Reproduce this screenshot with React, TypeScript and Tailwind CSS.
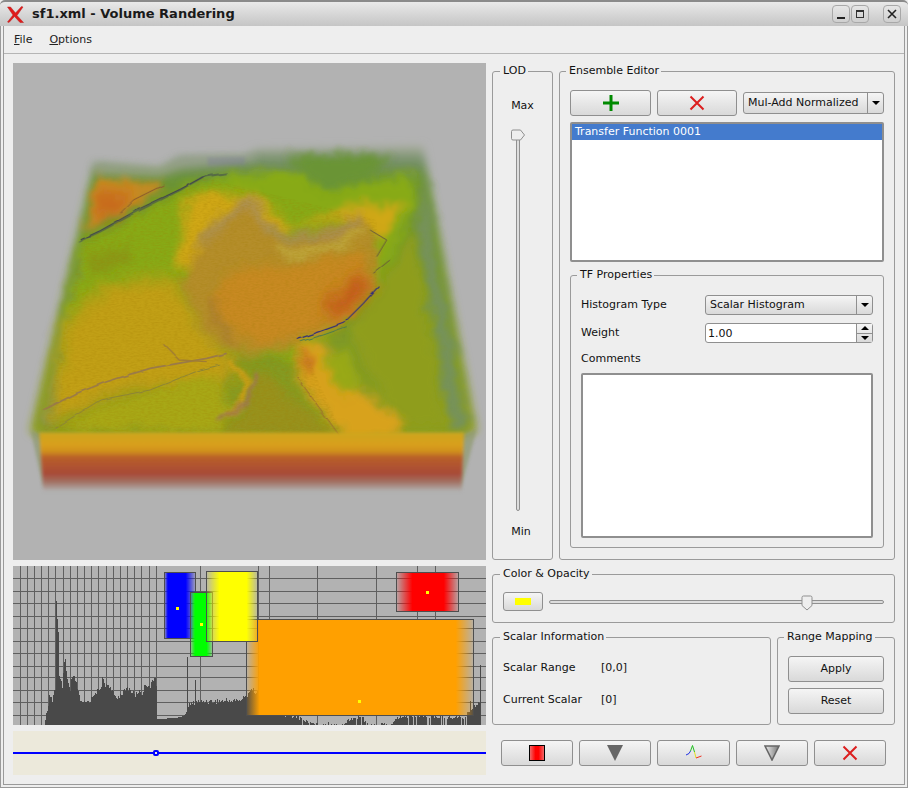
import type { ReactNode } from 'react'

const btn = 'flex items-center justify-center rounded-[3px] border border-[#8f8f8f] bg-gradient-to-b from-[#f5f5f5] to-[#d9d9d9]'

function Group({ title, className, legend = 'left-[7px]', children }: { title: string; className: string; legend?: string; children?: ReactNode }) {
  return (
    <div className={`relative rounded-[3px] border border-[#9a9a9a] ${className}`}>
      <span className={`absolute -top-[8px] ${legend} bg-[#eeeeee] pl-[3px] pr-[2px] leading-[14px]`}>{title}</span>
      {children}
    </div>
  )
}

function Arrow() {
  return <span className="h-0 w-0 border-x-[4px] border-t-[4px] border-x-transparent border-t-black" />
}

function Combo({ label, className }: { label: string; className: string }) {
  return (
    <div className={`${btn} !justify-start ${className}`}>
      <span className="flex-1 pl-[4px]">{label}</span>
      <span className="flex h-full w-[16px] items-center justify-center border-l border-[#8f8f8f]">
        <Arrow />
      </span>
    </div>
  )
}

function RedX({ size }: { size: number }) {
  return (
    <svg width={size} height={size} viewBox="0 0 16 16">
      <path d="M1.5 1.5 14.5 14.5M14.5 1.5 1.5 14.5" stroke="#dc1f1f" strokeWidth="2" fill="none" />
    </svg>
  )
}

function VolumeRender() {
  return (
    <svg className="block h-[497px] w-[473px]" viewBox="39 9 1419 1491" preserveAspectRatio="none">
      <defs>
        <filter id="b4" x="-20%" y="-20%" width="140%" height="140%"><feGaussianBlur stdDeviation="4" /></filter>
        <filter id="b12" x="-20%" y="-20%" width="140%" height="140%"><feGaussianBlur stdDeviation="12" /></filter>
        <filter id="b22" x="-30%" y="-30%" width="160%" height="160%"><feGaussianBlur stdDeviation="22" /></filter>
        <filter id="organic" x="-5%" y="-5%" width="110%" height="110%">
          <feTurbulence type="fractalNoise" baseFrequency="0.018" numOctaves="3" seed="7" result="n" />
          <feDisplacementMap in="SourceGraphic" in2="n" scale="44" xChannelSelector="R" yChannelSelector="G" />
          <feGaussianBlur stdDeviation="3" />
        </filter>
        <filter id="jag" x="-5%" y="-5%" width="110%" height="110%">
          <feTurbulence type="fractalNoise" baseFrequency="0.025" numOctaves="2" seed="3" result="n" />
          <feDisplacementMap in="SourceGraphic" in2="n" scale="9" xChannelSelector="R" yChannelSelector="G" />
          <feGaussianBlur stdDeviation="0.8" />
        </filter>
        <filter id="grain" x="0" y="0" width="100%" height="100%">
          <feTurbulence type="fractalNoise" baseFrequency="0.09 0.22" numOctaves="3" seed="4" />
          <feColorMatrix values="0 0 0 0 0.35  0 0 0 0 0.2  0 0 0 0 0  0 0 0 1.7 -0.68" />
        </filter>
        <linearGradient id="front" x1="0" y1="0" x2="0" y2="1">
          <stop offset="0" stopColor="#cda51c" />
          <stop offset="0.2" stopColor="#d9a01c" />
          <stop offset="0.32" stopColor="#d0901e" />
          <stop offset="0.42" stopColor="#b95f28" />
          <stop offset="0.7" stopColor="#a84a38" />
          <stop offset="0.84" stopColor="#a27263" />
          <stop offset="1" stopColor="#b2b2b2" />
        </linearGradient>
        <linearGradient id="topfade" x1="0" y1="0" x2="0" y2="1">
          <stop offset="0" stopColor="#a8ac9c" />
          <stop offset="0.05" stopColor="#76906a" />
          <stop offset="0.12" stopColor="#6b9434" />
          <stop offset="1" stopColor="#8e9e1e" />
        </linearGradient>
        <clipPath id="grainArea">
          <path d="M250 540 600 350 1130 480 1130 700 900 840 1030 1130 130 1110Z" />
        </clipPath>
      </defs>
      <rect x="39" y="9" width="1419" height="1491" fill="#b2b2b2" />

      {/* top face */}
      <g filter="url(#b12)">
        <path d="M283 310 480 328 540 292 735 288 770 268 1268 258 1430 1112 1385 1135 130 1135 90 1115Z" fill="url(#topfade)" />
      </g>
      <g filter="url(#organic)">
        <path d="M1250 500 1270 330 1400 1100 1350 1110Z" fill="#76925a" filter="url(#b12)" />
        <path d="M300 560 240 560 120 1100 170 1100Z" fill="#7c9450" filter="url(#b12)" />
        <path d="M1050 810 1240 500 1340 1100 1190 1100Z" fill="#8f9d1e" filter="url(#b12)" />
        <path d="M245 550 600 360 820 330 1040 370 1240 340 1250 440 1120 700 900 900 560 850 170 950Z" fill="#88aa12" filter="url(#b12)" />
        <path d="M260 590 390 550 390 610 270 640Z" fill="#8a9a18" filter="url(#b12)" />
        <path d="M870 285 1170 285 1130 340 1000 395 920 360Z" fill="#6b9435" filter="url(#b12)" />
        <path d="M140 1100 190 800 290 690 500 640 620 800 720 920 660 990 420 990 260 1040Z" fill="#c2a016" filter="url(#b22)" />
        <path d="M170 1108 300 1035 640 940 690 1060 660 1120Z" fill="#a8a815" filter="url(#b12)" />
        <path d="M560 400 760 400 880 500 1080 430 1220 440 1150 540 1020 480 800 520 600 640 530 620Z" fill="#d0a818" filter="url(#b12)" />
        <path d="M285 350 480 365 490 385 255 520Z" fill="#c88a22" filter="url(#b12)" />
        <path d="M300 400 400 395 340 465 290 480Z" fill="#c8641c" filter="url(#b22)" />

        {/* central basin */}
        <path d="M600 550 740 420 810 510 900 540 1090 470 1130 530 1130 690 1010 800 880 860 740 890 620 830 540 680Z" fill="#b58e2c" filter="url(#b12)" />
        <path d="M640 700 700 625 900 620 1080 570 1120 660 1050 770 890 830 760 850 660 790Z" fill="#c88a24" filter="url(#b12)" />
        <path d="M970 750 1060 640 1110 650 1090 720 1000 780Z" fill="#c65c1e" filter="url(#b22)" />
        <path d="M830 560 900 590 1000 560 1090 510" stroke="#c4b444" strokeWidth="20" fill="none" filter="url(#b12)" />
        <path d="M600 550 720 440 750 420 810 510 900 540 1000 520 1090 470" stroke="#a98e5a" strokeWidth="26" fill="none" filter="url(#b12)" />
        <path d="M640 700 650 790 700 850" stroke="#a87c34" strokeWidth="18" fill="none" filter="url(#b12)" />

        {/* lower ridge and fan */}
        <path d="M760 920 1030 1135 660 1115 740 1060Z" fill="#98921e" filter="url(#b12)" />
        <path d="M885 850 970 850 1040 960 1210 1080 1190 1130 1040 1150 895 960Z" fill="#d8a21e" filter="url(#b12)" />
        <path d="M890 855 920 950 950 900Z" fill="#c87524" filter="url(#b12)" />
        <path d="M1040 860 1080 960 1030 1010 970 900Z" fill="#98a818" filter="url(#b12)" />
        <path d="M690 900 740 960 725 1040 675 1070" stroke="#c8a018" strokeWidth="20" fill="none" filter="url(#b4)" />
        <path d="M765 930 750 1030 650 1085" stroke="#a07a50" strokeWidth="13" fill="none" filter="url(#b4)" />
      </g>

      {/* soft rim along the back edge */}
      <path d="M283 310 480 328 540 292 735 288 770 285 770 300 540 325 480 350 283 340Z" fill="#a6a89c" filter="url(#b12)" opacity="0.7" />
      <path d="M622 292 735 290 735 315 622 318Z" fill="#7a76a0" filter="url(#b4)" opacity="0.3" />

      <g clipPath="url(#grainArea)">
        <rect x="39" y="250" width="1419" height="900" filter="url(#grain)" opacity="0.32" />
      </g>

      {/* fault lines */}
      <g fill="none" filter="url(#jag)">
        <path d="M235 545 300 515 420 450 540 390 610 350 680 340" stroke="#4c5a4c" strokeWidth="6" opacity="0.7" />
        <path d="M240 540 300 512 420 445 540 388 610 350" stroke="#3a3a50" strokeWidth="2.5" />
        <path d="M360 460 400 420 490 375" stroke="#8a5a30" strokeWidth="3" />
        <path d="M890 838 960 815 1030 790 1090 730 1135 680" stroke="#34307a" strokeWidth="3.5" />
        <path d="M900 845 970 825 1040 800" stroke="#4d7a50" strokeWidth="3" />
        <path d="M1130 590 1160 540 1110 510 M1120 640 1170 600" stroke="#6a5a3c" strokeWidth="3" />
        <path d="M130 1050 230 1000 320 965 450 925 620 895 680 880" stroke="#9a7a48" strokeWidth="5" />
        <path d="M165 1105 300 1020 450 990 600 930 660 915" stroke="#8c8438" strokeWidth="3" />
        <path d="M490 850 540 900 620 905" stroke="#a07c34" strokeWidth="4" />
        <path d="M890 950 1035 1150" stroke="#9c6c30" strokeWidth="3" />
      </g>

      {/* front face */}
      <path d="M92 1112 130 1125 130 1285Z" fill="#8f9a70" filter="url(#b4)" opacity="0.7" />
      <path d="M1430 1108 1385 1125 1380 1295Z" fill="#8f9a70" filter="url(#b4)" opacity="0.7" />
      <path d="M118 1118H1392L1384 1294H130Z" fill="url(#front)" filter="url(#b4)" />
    </svg>
  )
}

// outline of the histogram: page x / top of the bar in page y
const HIST: [number, number][] = [
  [44, 724], [46, 714], [48, 708], [49, 697], [52, 700], [54, 690], [55, 688], [56, 601], [57, 620], [58, 633], [59, 678],
  [62, 686], [63, 675], [64, 664], [65, 661], [67, 680], [70, 692], [71, 679], [74, 678], [76, 684], [79, 697], [82, 704],
  [90, 700], [95, 692], [100, 690], [102, 679], [105, 685], [108, 684], [112, 692], [116, 698], [120, 695], [125, 690],
  [127, 688], [130, 690], [135, 695], [138, 691], [142, 694], [145, 684], [150, 686], [153, 680], [155, 676], [156, 684],
  [157, 719], [175, 718], [180, 717], [184, 715], [186, 712], [189, 705], [195, 702], [240, 700], [246, 696], [250, 690],
  [258, 692], [262, 712], [296, 716], [303, 720], [312, 723], [317, 725], [343, 725], [350, 719], [362, 717], [366, 725],
  [392, 725], [397, 717], [415, 716], [440, 717], [465, 718], [468, 712], [474, 705], [480, 703], [481, 725],
]

function histPath() {
  let d = ''
  let k = 0
  for (let x = 44; x < 481; x++) {
    while (k < HIST.length - 2 && HIST[k + 1][0] <= x) k++
    const [x0, y0] = HIST[k]
    const [x1, y1] = HIST[k + 1]
    let y = y0 + ((y1 - y0) * (x - x0)) / (x1 - x0)
    const noise = Math.sin(x * 12.9898) * 43758.5453
    const n = noise - Math.floor(noise)
    if (x < 157 || x > 188) y += (n - 0.5) * 5
    if (x === 187) y = 657
    if (x === 195) y = 680
    if (x === 470) y = 701
    if (x === 480) y = 665
    if (x > 300 && x < 468 && n > 0.82) y = 725
    if (x > 317 && x < 343 && n > 0.6 && n < 0.7) y = 722
    d += `M${x} 725V${Math.round(Math.min(y, 725))}H${x + 1}V725Z`
  }
  return d
}

const V_LINES = [20, 27, 34, 41, 48, 55, 63, 70, 77, 84, 91, 98, 106, 113, 120, 127, 134, 141, 149, 156, 200, 258, 269, 317, 376, 417, 435]
const H_LINES = [578, 591, 603, 616, 628, 641, 653, 666, 677, 690, 702, 715]

function TfBox({ x, y, w, h, gid, dot }: { x: number; y: number; w: number; h: number; gid: string; dot?: [number, number] }) {
  return (
    <g>
      <rect x={x} y={y} width={w} height={h} fill={`url(#${gid})`} />
      <rect x={x + 0.5} y={y + 0.5} width={w - 1} height={h - 1} fill="none" stroke="#4e4e4e" />
      {dot && <rect x={dot[0]} y={dot[1]} width="3" height="3" fill="#ffff00" />}
    </g>
  )
}

function Ramp({ id, color, a, b }: { id: string; color: string; a: number; b: number }) {
  return (
    <linearGradient id={id} x1="0" x2="1" y1="0" y2="0">
      <stop offset="0" stopColor={color} stopOpacity="0.05" />
      <stop offset={a} stopColor={color} />
      <stop offset={b} stopColor={color} />
      <stop offset="1" stopColor={color} stopOpacity="0.05" />
    </linearGradient>
  )
}

function Histogram() {
  return (
    <svg className="block h-[159px] w-[473px]" viewBox="13 566 473 159" shapeRendering="crispEdges">
      <defs>
        <Ramp id="tf-blue" color="#0000ff" a={0.12} b={0.68} />
        <Ramp id="tf-green" color="#00ff00" a={0.22} b={0.72} />
        <Ramp id="tf-yellow" color="#ffff00" a={0.26} b={0.78} />
        <Ramp id="tf-orange" color="#ffa000" a={0.06} b={0.92} />
        <Ramp id="tf-red" color="#ff0000" a={0.26} b={0.76} />
      </defs>
      <rect x="13" y="566" width="473" height="159" fill="#b2b2b2" />
      {V_LINES.map((x) => <rect key={x} x={x} y="566" width="1" height="159" fill="#5f5f5f" />)}
      {H_LINES.map((y) => <rect key={y} x="13" y={y} width="473" height="1" fill="#5f5f5f" />)}
      <path d={histPath()} fill="#494949" />
      <TfBox x={164} y={572} w={32} h={67} gid="tf-blue" dot={[176, 607]} />
      <TfBox x={190} y={592} w={23} h={65} gid="tf-green" dot={[200, 623]} />
      <TfBox x={246} y={619} w={228} h={97} gid="tf-orange" dot={[358, 700]} />
      <TfBox x={206} y={571} w={52} h={71} gid="tf-yellow" />
      <TfBox x={396} y={572} w={63} h={40} gid="tf-red" dot={[426, 591]} />
    </svg>
  )
}

export default function App() {
  return (
    <div className="flex h-[788px] w-[908px] flex-col overflow-hidden bg-[#eeeeee] font-['DejaVu_Sans',sans-serif] text-[11px] text-[#111111]">
      {/* title bar */}
      <div className="flex h-[26px] shrink-0 items-center rounded-t-[5px] border-t-2 border-[#8a8a8a] bg-gradient-to-b from-[#e9e9e9] to-[#c5c5c5] pl-[7px] pr-[7px]">
        <svg width="17" height="17" viewBox="0 0 17 17">
          <path d="M0.5 1 3.5 1 8.5 7 14.5 0.5 16 1 10 9.5 16.5 16.5 13 16.5 7.5 10.5 2 16.5 0.5 16 6 9Z" fill="#e01a1a" stroke="#b82020" strokeWidth="0.5" />
        </svg>
        <span className="ml-[8px] flex-1 text-[13px] font-bold text-[#1a1a1a]">sf1.xml - Volume Randering</span>
        <div className="flex h-[18px] w-[18px] items-center justify-center rounded-[4px] border border-[#a8a8a8] bg-gradient-to-b from-[#e6e6e6] to-[#cfcfcf]">
          <span className="mt-[7px] h-[2px] w-[8px] bg-[#222222]" />
        </div>
        <div className="ml-[1px] flex h-[18px] w-[18px] items-center justify-center rounded-[4px] border border-[#a8a8a8] bg-gradient-to-b from-[#e6e6e6] to-[#cfcfcf]">
          <span className="h-[8px] w-[8px] border border-t-2 border-[#333333]" />
        </div>
        <div className="ml-[14px] flex h-[18px] w-[18px] items-center justify-center rounded-[4px] border border-[#a8a8a8] bg-gradient-to-b from-[#e6e6e6] to-[#cfcfcf]">
          <svg width="10" height="10" viewBox="0 0 10 10">
            <path d="M1 1 9 9M9 1 1 9" stroke="#222222" strokeWidth="1.6" />
          </svg>
        </div>
      </div>

      <div className="flex flex-1 flex-col border-x-4 border-b-4 border-double border-[#9a9a9a]">
        {/* menu */}
        <div className="flex h-[28px] shrink-0 items-center gap-[17px] border-b border-[#b5b5b5] pl-[10px] pt-[1px] text-[#222222]">
          <span><span className="underline">F</span>ile</span>
          <span><span className="underline">O</span>ptions</span>
        </div>

        <div className="flex pl-[9px] pt-[9px]">
          {/* left column */}
          <div className="flex w-[473px] flex-col gap-[6px]">
            <VolumeRender />
            <Histogram />
            <div className="relative h-[44px] bg-[#ece9db]">
              <div className="absolute left-0 right-0 top-[21px] h-[2px] bg-[#0000ff]" />
              <div className="absolute left-[140px] top-[19px] h-[6px] w-[6px] rounded-[2px] border-2 border-[#0000ff] bg-[#ece9db]" />
            </div>
          </div>

          {/* right column */}
          <div className="ml-[6px] flex w-[403px] flex-col pt-[8px]">
            <div className="flex h-[489px] gap-[6px]">
              <Group title="LOD" className="w-[61px]">
                <div className="flex h-full flex-col items-center pt-[27px]">
                  <span className="leading-[14px]">Max</span>
                  <div className="relative mr-[9px] mt-[17px] h-[381px] w-[4px] rounded-[2px] border border-[#8f8f8f] bg-[#dddddd]">
                    <svg className="absolute -left-[7px] -top-[2px]" width="16" height="12" viewBox="0 0 16 12">
                      <path d="M1.5 2.5Q1.5 1 3 1H10.5L14.5 6 10.5 11H3Q1.5 11 1.5 9.5Z" fill="#eeeeee" stroke="#8f8f8f" />
                    </svg>
                  </div>
                  <span className="mt-[14px] pr-[3px] leading-[14px]">Min</span>
                </div>
              </Group>

              <Group title="Ensemble Editor" legend="left-[6px]" className="w-[336px]">
                <div className="flex flex-col pl-[10px] pt-[18px]">
                  <div className="flex items-center gap-[6px]">
                    <div className={`${btn} h-[26px] w-[81px]`}>
                      <svg width="16" height="16" viewBox="0 0 16 16">
                        <path d="M8 0V16M0 8H16" stroke="#008a00" strokeWidth="3" />
                      </svg>
                    </div>
                    <div className={`${btn} h-[26px] w-[80px]`}>
                      <RedX size={16} />
                    </div>
                    <Combo label="Mul-Add Normalized" className="h-[22px] w-[141px]" />
                  </div>
                  <div className="mt-[6px] h-[140px] w-[314px] rounded-[2px] border-2 border-[#8f8f8f] bg-white">
                    <div className="h-[16px] bg-[#447bcd] pl-[3px] leading-[16px] text-white">Transfer Function 0001</div>
                  </div>
                  <Group title="TF Properties" legend="left-[6px]" className="mt-[13px] h-[273px] w-[314px]">
                    <div className="grid grid-cols-[124px_168px] items-center gap-y-[8px] pl-[10px] pt-[19px]">
                      <span>Histogram Type</span>
                      <Combo label="Scalar Histogram" className="h-[20px]" />
                      <span>Weight</span>
                      <div className="flex h-[20px] rounded-[3px] border border-[#8f8f8f] bg-white">
                        <span className="flex-1 pl-[2px] leading-[19px]">1.00</span>
                        <div className="flex w-[16px] flex-col border-l border-[#8f8f8f] bg-gradient-to-b from-[#f5f5f5] to-[#d9d9d9]">
                          <span className="flex flex-1 items-center justify-center border-b border-[#8f8f8f]">
                            <span className="h-0 w-0 border-x-[4px] border-b-[4px] border-x-transparent border-b-black" />
                          </span>
                          <span className="flex flex-1 items-center justify-center"><Arrow /></span>
                        </div>
                      </div>
                    </div>
                    <div className="pl-[10px] pt-[9px] leading-[14px]">Comments</div>
                    <div className="ml-[10px] mt-[7px] h-[165px] w-[292px] rounded-[2px] border-2 border-[#8f8f8f] bg-white" />
                  </Group>
                </div>
              </Group>
            </div>

            <Group title="Color & Opacity" className="mt-[14px] flex h-[49px] items-center pl-[10px] pt-[6px]">
              <div className={`${btn} h-[19px] w-[40px]`}>
                <span className="h-[7px] w-[16px] bg-[#ffff00]" />
              </div>
              <div className="relative ml-[6px] h-[4px] w-[335px] rounded-[2px] border border-[#8f8f8f] bg-[#dddddd]">
                <svg className="absolute left-[251px] -top-[6px]" width="12" height="16" viewBox="0 0 12 16">
                  <path d="M1 2.5Q1 1 2.5 1H9.5Q11 1 11 2.5V10.5L6 15 1 10.5Z" fill="#eeeeee" stroke="#8f8f8f" />
                </svg>
              </div>
            </Group>

            <div className="mt-[14px] flex h-[88px] gap-[6px]">
              <Group title="Scalar Information" className="w-[279px]">
                <div className="grid grid-cols-[98px_1fr] gap-y-[18px] pl-[10px] pt-[23px] leading-[14px]">
                  <span>Scalar Range</span>
                  <span>[0,0]</span>
                  <span>Current Scalar</span>
                  <span>[0]</span>
                </div>
              </Group>
              <Group title="Range Mapping" legend="left-[6px]" className="w-[118px]">
                <div className="flex flex-col gap-[6px] pl-[10px] pt-[18px]">
                  <div className={`${btn} h-[26px] w-[96px]`}>Apply</div>
                  <div className={`${btn} h-[26px] w-[96px]`}>Reset</div>
                </div>
              </Group>
            </div>

            <div className="mt-[15px] flex gap-[6px] pl-[9px]">
              <div className={`${btn} h-[26px] w-[72px]`}>
                <svg width="16" height="16" viewBox="0 0 16 16">
                  <defs>
                    <linearGradient id="redbar" x1="0" x2="1" y1="0" y2="0">
                      <stop offset="0" stopColor="#f07070" />
                      <stop offset="0.4" stopColor="#ff0000" />
                      <stop offset="0.6" stopColor="#ff0000" />
                      <stop offset="1" stopColor="#f07070" />
                    </linearGradient>
                  </defs>
                  <rect x="0.5" y="0.5" width="15" height="15" fill="url(#redbar)" stroke="#000000" />
                </svg>
              </div>
              <div className={`${btn} h-[26px] w-[72px]`}>
                <svg width="16" height="16" viewBox="0 0 16 16"><path d="M0 0H16L8 16Z" fill="#666666" /></svg>
              </div>
              <div className={`${btn} h-[26px] w-[73px]`}>
                <svg width="16" height="16" viewBox="0 0 16 16" fill="none" strokeWidth="1">
                  <path d="M0 10 3 8.5 4.5 6" stroke="#2030e0" />
                  <path d="M4.5 6 6.5 0.5 8.5 7" stroke="#20c020" />
                  <path d="M8.5 7 10 13" stroke="#e8e020" />
                  <path d="M10 13 15.5 11" stroke="#f03020" />
                </svg>
              </div>
              <div className={`${btn} h-[26px] w-[72px]`}>
                <svg width="16" height="16" viewBox="0 0 16 16">
                  <defs>
                    <linearGradient id="graytri" x1="0" x2="1" y1="0" y2="0">
                      <stop offset="0" stopColor="#eeeeee" />
                      <stop offset="1" stopColor="#777777" />
                    </linearGradient>
                  </defs>
                  <path d="M1 1H15L8 15Z" fill="url(#graytri)" stroke="#666666" strokeWidth="1.6" />
                </svg>
              </div>
              <div className={`${btn} h-[26px] w-[72px]`}>
                <RedX size={16} />
              </div>
            </div>
          </div>
        </div>
      </div>
    </div>
  )
}
